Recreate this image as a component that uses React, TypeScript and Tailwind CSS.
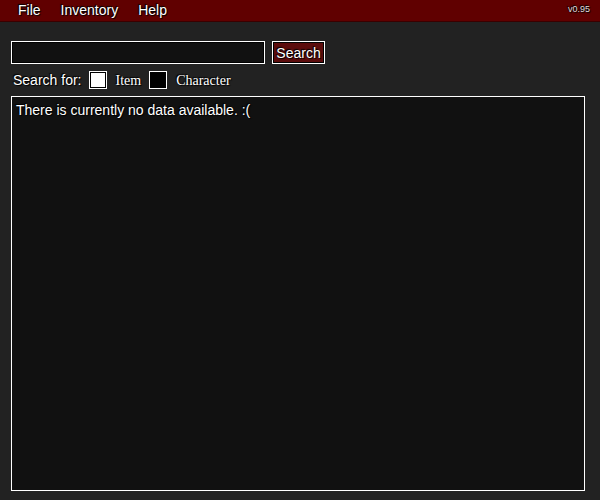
import React from "react";

const sh = "[text-shadow:1px_1px_1px_#000,-1px_-1px_1px_#000]";

export default function App() {
  return (
    <div className="w-[600px] h-[500px] bg-[#222222] text-white overflow-hidden font-['Liberation_Sans',Arial,sans-serif]">
      <div className="relative h-[22px] bg-[#600000] border-b border-[#3a0000] flex items-center pl-[8px] text-[14px] [text-shadow:1px_1px_1px_#000,-1px_-1px_1px_#000]">
        <span className="px-[10px]">File</span>
        <span className="px-[10px]">Inventory</span>
        <span className="px-[10px]">Help</span>
        <span className="absolute right-[10px] top-[3px] text-[9px] text-[#dddddd]">v0.95</span>
      </div>
      <div className="flex gap-[7px] ml-[11px] mt-[19px]">
        <div className="w-[254px] h-[23px] border border-white bg-[#111111] shadow-[inset_0_0_0_1px_#000]" />
        <div className="w-[53px] h-[23px] border border-white p-px bg-black">
          <div className="w-full h-full bg-[#5c0c0c] flex items-center justify-center pt-px text-[14px] [text-shadow:1px_1px_1px_#000,-1px_-1px_1px_#000]">
            Search
          </div>
        </div>
      </div>
      <div className="flex items-center ml-[13px] mt-[6px] h-[20px] text-[14px] [text-shadow:1px_1px_1px_#000,-1px_-1px_1px_#000]">
        <span>Search for:</span>
        <div className="ml-[8px] w-[18px] h-[18px] border border-white bg-black p-px">
          <div className="w-full h-full bg-white" />
        </div>
        <span className="ml-[8px] font-['Liberation_Serif',serif]">Item</span>
        <div className="ml-[8px] w-[18px] h-[18px] border border-white bg-black" />
        <span className="ml-[9px] font-['Liberation_Serif',serif]">Character</span>
      </div>
      <div className="ml-[11px] mt-[6px] w-[574px] h-[395px] border border-white bg-[#111111] px-[4px] pt-[3px] text-[14px] [text-shadow:1px_1px_1px_#000,-1px_-1px_1px_#000]">
        There is currently no data available. :(
      </div>
    </div>
  );
}
